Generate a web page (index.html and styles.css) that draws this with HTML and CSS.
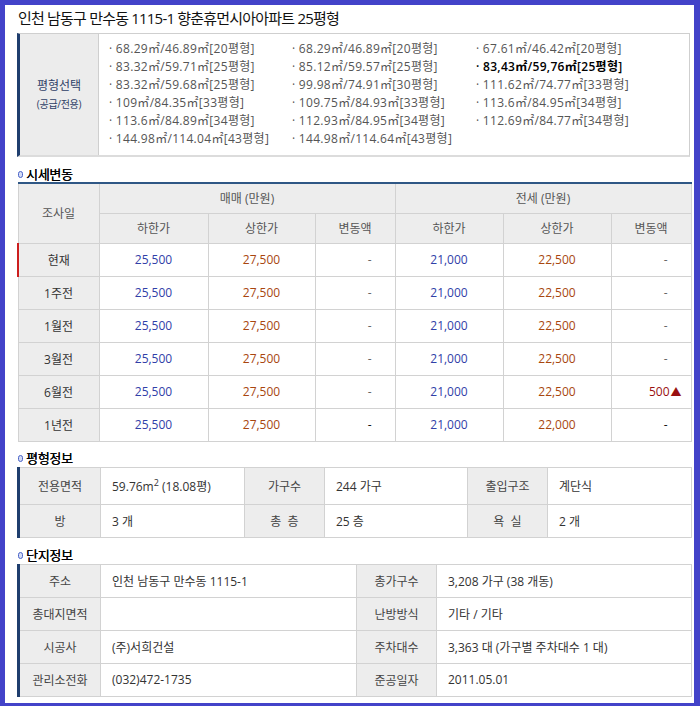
FILE: index.html
```html
<!DOCTYPE html>
<html lang="ko">
<head>
<meta charset="utf-8">
<link rel="stylesheet" href="styles.css">
</head>
<body>
<div class="frame">
  <h1 class="title">인천 남동구 만수동 1115-1 향춘휴먼시아아파트 25평형</h1>

  <div class="select-box">
    <div class="select-label">
      <div class="sl-main">평형선택</div>
      <div class="sl-sub">(공급/전용)</div>
    </div>
    <ul class="select-list">
      <li>· 68.29㎡/46.89㎡[20평형]</li>
      <li>· 68.29㎡/46.89㎡[20평형]</li>
      <li>· 67.61㎡/46.42㎡[20평형]</li>
      <li>· 83.32㎡/59.71㎡[25평형]</li>
      <li>· 85.12㎡/59.57㎡[25평형]</li>
      <li class="on">· 83,43㎡/59,76㎡[25평형]</li>
      <li>· 83.32㎡/59.68㎡[25평형]</li>
      <li>· 99.98㎡/74.91㎡[30평형]</li>
      <li>· 111.62㎡/74.77㎡[33평형]</li>
      <li>· 109㎡/84.35㎡[33평형]</li>
      <li>· 109.75㎡/84.93㎡[33평형]</li>
      <li>· 113.6㎡/84.95㎡[34평형]</li>
      <li>· 113.6㎡/84.89㎡[34평형]</li>
      <li>· 112.93㎡/84.95㎡[34평형]</li>
      <li>· 112.69㎡/84.77㎡[34평형]</li>
      <li>· 144.98㎡/114.04㎡[43평형]</li>
      <li>· 144.98㎡/114.64㎡[43평형]</li>
    </ul>
  </div>

  <h2 class="sec-title"><span class="dot"></span>시세변동</h2>
  <table class="tbl price">
    <colgroup>
      <col class="c81"><col class="c109"><col class="c107"><col class="c80"><col class="c108"><col class="c108"><col class="c80">
    </colgroup>
    <thead>
      <tr class="h1">
        <th rowspan="2">조사일</th>
        <th colspan="3">매매 (만원)</th>
        <th colspan="3">전세 (만원)</th>
      </tr>
      <tr class="h2">
        <th>하한가</th><th>상한가</th><th>변동액</th>
        <th>하한가</th><th>상한가</th><th>변동액</th>
      </tr>
    </thead>
    <tbody>
      <tr class="cur">
        <th>현재</th><td class="lo">25,500</td><td class="hi">27,500</td><td class="chg">-<i></i></td>
        <td class="lo">21,000</td><td class="hi">22,500</td><td class="chg">-<i></i></td>
      </tr>
      <tr>
        <th>1주전</th><td class="lo">25,500</td><td class="hi">27,500</td><td class="chg">-<i></i></td>
        <td class="lo">21,000</td><td class="hi">22,500</td><td class="chg">-<i></i></td>
      </tr>
      <tr>
        <th>1월전</th><td class="lo">25,500</td><td class="hi">27,500</td><td class="chg">-<i></i></td>
        <td class="lo">21,000</td><td class="hi">22,500</td><td class="chg">-<i></i></td>
      </tr>
      <tr>
        <th>3월전</th><td class="lo">25,500</td><td class="hi">27,500</td><td class="chg">-<i></i></td>
        <td class="lo">21,000</td><td class="hi">22,500</td><td class="chg">-<i></i></td>
      </tr>
      <tr>
        <th>6월전</th><td class="lo">25,500</td><td class="hi">27,500</td><td class="chg">-<i></i></td>
        <td class="lo">21,000</td><td class="hi">22,500</td><td class="chg up">500<i>▲</i></td>
      </tr>
      <tr>
        <th>1년전</th><td class="lo">25,500</td><td class="hi">27,500</td><td class="chg dk">-<i></i></td>
        <td class="lo">21,000</td><td class="hi">22,000</td><td class="chg dk">-<i></i></td>
      </tr>
    </tbody>
  </table>

  <h2 class="sec-title"><span class="dot"></span>평형정보</h2>
  <table class="tbl info navy">
    <colgroup>
      <col class="c82"><col class="c144"><col class="c80"><col class="c143"><col class="c80"><col class="c144">
    </colgroup>
    <tbody>
      <tr class="r36">
        <th>전용면적</th><td>59.76m<sup>2</sup> (18.08평)</td>
        <th>가구수</th><td>244 가구</td>
        <th>출입구조</th><td>계단식</td>
      </tr>
      <tr>
        <th>방</th><td>3 개</td>
        <th>총&nbsp;&nbsp;층</th><td>25 층</td>
        <th>욕&nbsp;&nbsp;실</th><td>2 개</td>
      </tr>
    </tbody>
  </table>

  <h2 class="sec-title s3"><span class="dot"></span>단지정보</h2>
  <table class="tbl info navy">
    <colgroup>
      <col class="c82"><col class="c256"><col class="c80"><col class="c255">
    </colgroup>
    <tbody>
      <tr><th>주소</th><td>인천 남동구 만수동 1115-1</td><th>총가구수</th><td>3,208 가구 (38 개동)</td></tr>
      <tr><th>총대지면적</th><td></td><th>난방방식</th><td>기타 / 기타</td></tr>
      <tr><th>시공사</th><td>(주)서희건설</td><th>주차대수</th><td>3,363 대 (가구별 주차대수 1 대)</td></tr>
      <tr><th>관리소전화</th><td>(032)472-1735</td><th>준공일자</th><td>2011.05.01</td></tr>
    </tbody>
  </table>
</div>
</body>
</html>
```

FILE: styles.css
```css
* { box-sizing: border-box; }
html, body { margin: 0; padding: 0; background: #4343c9; }
body {
  width: 700px;
  height: 706px;
  font-family: "Open Sans", "Noto Sans CJK KR", sans-serif;
  color: #333;
}
.frame {
  width: 700px;
  height: 706px;
  border-style: solid;
  border-color: #4343c9;
  border-width: 5px 6px 3px 5px;
  background: #fff;
  padding: 0 4px 0 12px;
  overflow: hidden;
}
.title {
  margin: 0;
  height: 28px;
  padding: 3px 0 0 1px;
  font-size: 15px;
  line-height: 20px;
  font-weight: normal;
  color: #111;
  letter-spacing: -0.8px;
  font-family: "Open Sans", "Noto Sans CJK KR", sans-serif;
}
.select-box {
  display: flex;
  height: 124px;
  border: 1px solid #cfcfcf;
  border-left: 3px solid #1f3e6e;
  border-bottom: 2px solid #dcdcdc;
}
.select-label {
  width: 79px;
  flex: none;
  background: #ececec;
  border-right: 1px solid #cfcfcf;
  display: flex;
  flex-direction: column;
  justify-content: center;
  align-items: center;
  color: #2e3f66;
  padding-bottom: 2px;
}
.sl-main { font-size: 12px; line-height: 20px; }
.sl-sub { font-size: 10px; line-height: 16px; letter-spacing: -0.3px; }
.select-list {
  list-style: none;
  margin: 0;
  padding: 6px 0 0 10px;
  display: grid;
  grid-template-columns: 183px 184px 184px;
  grid-auto-rows: 18px;
  font-size: 12px;
  line-height: 18px;
  color: #555;
  letter-spacing: 0.3px;
}
.select-list li { white-space: nowrap; }
.select-list li.on { color: #000; font-weight: 600; }

.sec-title {
  margin: 0;
  height: 25px;
  padding: 8px 0 0 1px;
  font-size: 13px;
  line-height: 16px;
  font-weight: normal;
  color: #000;
  letter-spacing: -0.3px;
  display: flex;
  align-items: center;
  gap: 3px;
  text-shadow: 0.3px 0 0 #000;
}
.sec-title.s3 { height: 26px; padding-top: 8px; }
.dot {
  display: inline-block;
  width: 5px;
  height: 7px;
  border: 1.5px solid #4a63c8;
  border-radius: 3px;
  background: #d4dcf4;
  margin-top: 1px;
}

.tbl {
  width: 673px;
  border-collapse: collapse;
  table-layout: fixed;
  font-size: 12px;
}
.tbl th, .tbl td {
  border: 1px solid #d2d2d2;
  padding: 0;
  white-space: nowrap;
  font-weight: normal;
}
.tbl th { background: #ededed; color: #444; text-align: center; }
.tbl td { background: #fff; color: #333; }

.c80 { width: 80px; } .c81 { width: 81px; } .c82 { width: 82px; }
.c107 { width: 107px; } .c108 { width: 108px; } .c109 { width: 109px; }
.c143 { width: 143px; } .c144 { width: 144px; }
.c255 { width: 255px; } .c256 { width: 256px; }

.price thead tr.h1 th { border-top: 2px solid #2f5785; }
.price tr.h1 { height: 30px; }
.price tr.h2 { height: 30px; }
.price thead th { color: #555; }
.price tbody tr { height: 33px; }
.price tbody th { color: #333; }
.price tr.cur th { border-left: 2px solid #cc1e1e; }
.price td { text-align: center; }
.price td.lo { color: #3140a8; }
.price td.hi { color: #a8460f; }
.price td.chg { text-align: right; padding-right: 9px; color: #666; }
.price td.chg.dk { color: #111; }
.price td.chg i { font-style: normal; display: inline-block; width: 14px; text-align: left; }
.price td.chg.up { color: #9a1010; }
.price td.chg.up i { width: auto; font-size: 11px; padding-left: 1px; color: #9a1010; }

.info td { padding-left: 11px; }
.info tr { height: 33px; }
.info tr.r36 { height: 37px; }
.navy tr th:first-child { border-left: 3px solid #1f3e6e; }
.info sup { font-size: 9px; line-height: 0; }
```
